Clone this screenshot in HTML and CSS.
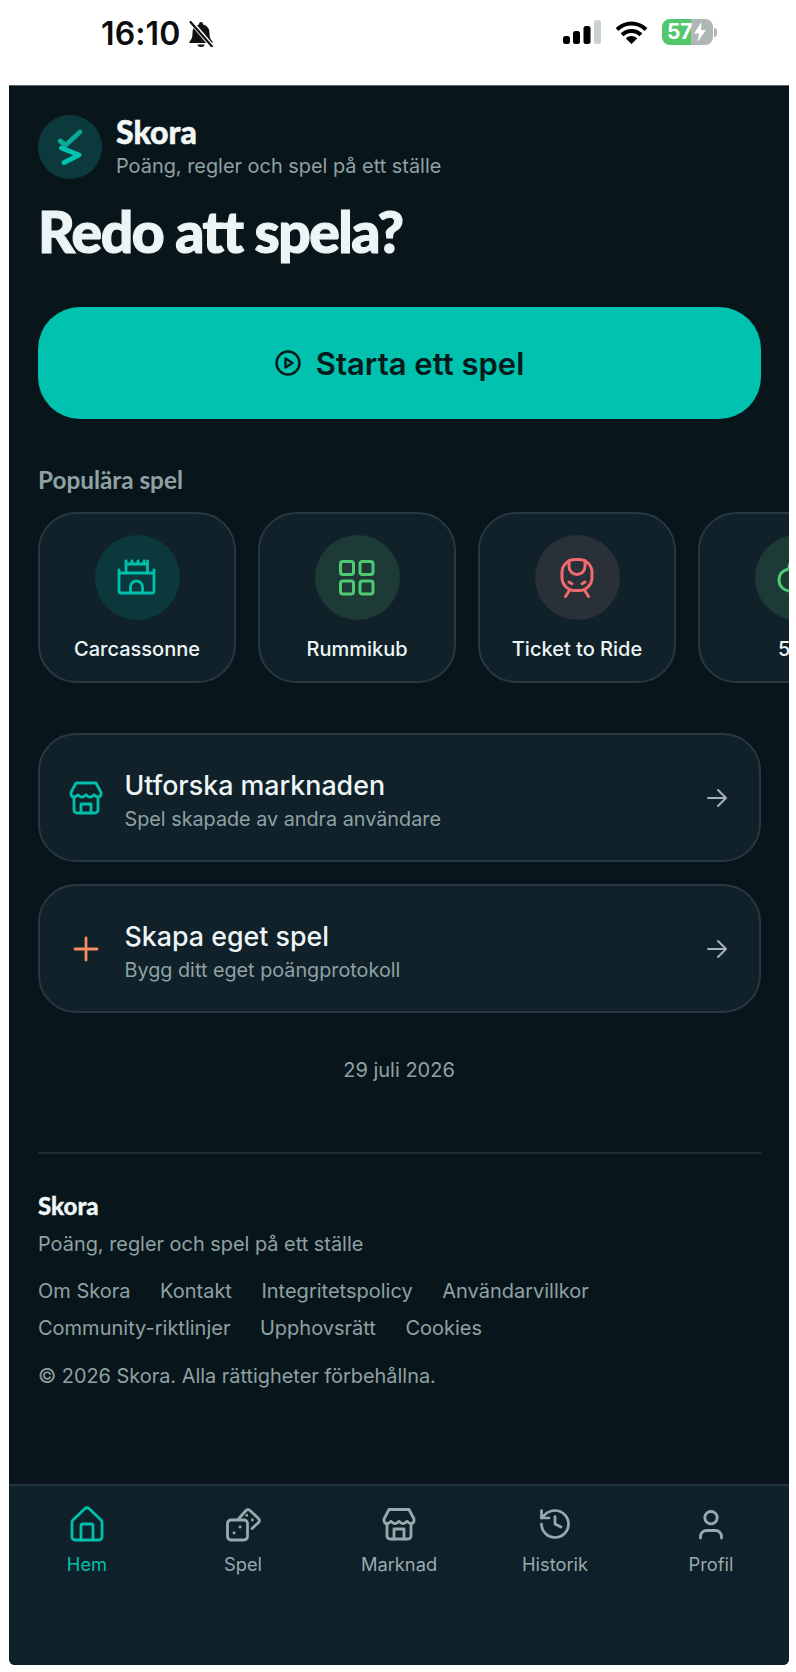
FILE: index.html
```html
<!DOCTYPE html>
<html lang="sv">
<head>
<meta charset="utf-8">
<title>Skora</title>
<link rel="stylesheet" href="styles.css">
</head>
<body>
<header class="status">
  <div class="status-left">
    <span class="time">16:10</span>
    <svg class="bell" viewBox="0 0 26 26" width="26" height="26"><path d="M13 1a2 2 0 0 1 2 2v.6c4 1 6.500 4 6.500 8.400 0 4.500 1 6.500 3 8.500V22H1.500v-1.500c2-2 3-4 3-8.500 0-4.400 2.500-7.400 6.500-8.400V3a2 2 0 0 1 2-2z" fill="#111"/><path d="M9.500 23.500a3.500 2.500 0 0 0 7 0z" fill="#111"/><path d="M2.500 0L24.500 26" stroke="#fff" stroke-width="4.500"/><path d="M2.500 1L24 25.500" stroke="#111" stroke-width="2.200" stroke-linecap="round"/></svg>
  </div>
  <div class="status-right">
    <svg viewBox="0 0 38 24" width="38" height="24"><rect x="0" y="16" width="7" height="8" rx="2.500" fill="#000"/><rect x="10" y="11" width="7" height="13" rx="2.500" fill="#000"/><rect x="20.500" y="6" width="7" height="18" rx="2.500" fill="#000"/><rect x="31" y="0" width="7" height="24" rx="2.500" fill="#c9d2d0"/></svg>
    <svg viewBox="0 0 33 23" width="33" height="23"><path d="M2 8.500c8.500-8 20.500-8 29 0M7 13.800c5.600-5.200 13.400-5.200 19 0" fill="none" stroke="#000" stroke-width="4"/><path d="M10.800 17.500c3.500-3.200 8-3.200 11.400 0l-5.700 5.500z" fill="#000"/></svg>
    <div class="battery"><div class="batt-body"><span class="batt-num">57</span><svg class="batt-bolt" viewBox="0 0 12 20" width="12" height="20"><path d="M7.500 0L0 11.500h5L3.500 20 12 8H7z" fill="#fff"/></svg></div><span class="batt-tip"></span></div>
  </div>
</header>

<div class="app">
  <main class="main">
    <section class="brand">
      <div class="logo">
        <svg viewBox="0 0 64 64" width="64" height="64"><path d="M42 17L27.700 30 22 26" fill="none" stroke="#0ea898" stroke-width="4.600" stroke-linecap="round" stroke-linejoin="round"/><path d="M23.500 33L41 40 26 47.700" fill="none" stroke="#00c4af" stroke-width="4.800" stroke-linecap="round" stroke-linejoin="round"/></svg>
      </div>
      <div class="brand-text">
        <div class="brand-name">Skora</div>
        <div class="brand-tag">Poäng, regler och spel på ett ställe</div>
      </div>
    </section>
    <h1 class="hero">Redo att spela?</h1>
    <button class="start">
      <svg viewBox="0 0 26 26" width="26" height="26"><circle cx="13" cy="13" r="11.500" fill="none" stroke="#061a1c" stroke-width="2.400"/><path d="M10.500 8.500l7 4.500-7 4.500z" fill="none" stroke="#061a1c" stroke-width="2.400" stroke-linejoin="round"/></svg>
      <span>Starta ett spel</span>
    </button>
    <h2 class="section-label">Populära spel</h2>
    <div class="carousel">
      <div class="game">
        <div class="game-icon teal">
          <svg viewBox="0 0 40 40" width="40" height="40" fill="none" stroke="#00c0ac" stroke-width="2.800" stroke-linecap="round" stroke-linejoin="round"><path d="M9 14V3h0v3h6V3h0v3h6V3h0v3h6V3h0v3h3.500V3v11"/><path d="M2 12v21a2 2 0 0 0 2 2h31a2 2 0 0 0 2-2V12v3H2"/><path d="M13.500 35v-6a6 6 0 0 1 12 0v6"/></svg>
        </div>
        <div class="game-name">Carcassonne</div>
      </div>
      <div class="game">
        <div class="game-icon green">
          <svg viewBox="0 0 40 40" width="40" height="40" fill="none" stroke="#4fc974" stroke-width="3"><rect x="3.500" y="3.500" width="13" height="13" rx="2.500"/><rect x="23" y="3.500" width="13" height="13" rx="2.500"/><rect x="3.500" y="23" width="13" height="13" rx="2.500"/><rect x="23" y="23" width="13" height="13" rx="2.500"/></svg>
        </div>
        <div class="game-name">Rummikub</div>
      </div>
      <div class="game">
        <div class="game-icon red">
          <svg viewBox="0 0 40 40" width="40" height="40" fill="none" stroke="#f06a6e" stroke-width="3" stroke-linecap="round" stroke-linejoin="round"><rect x="5" y="1.500" width="30" height="31" rx="13"/><path d="M12 2.500v6a8 8 0 0 0 16 0v-6"/><path d="M12 24l3 1.800M28 24l-3 1.800"/><path d="M12 33l-3.500 5.500M28 33l3.500 5.500"/></svg>
        </div>
        <div class="game-name">Ticket to Ride</div>
      </div>
      <div class="game">
        <div class="game-icon green">
          <svg viewBox="0 0 40 40" width="40" height="40" fill="none" stroke="#4fc974" stroke-width="3" stroke-linecap="round" stroke-linejoin="round"><path d="M20 2a8 8 0 0 0-8 9c-6 1-10 5-10 11a11 11 0 0 0 11 11h14a11 11 0 0 0 11-11c0-6-4-10-10-11a8 8 0 0 0-8-9z"/></svg>
        </div>
        <div class="game-name">500</div>
      </div>
    </div>
    <a class="row">
      <svg class="row-icon" viewBox="0 0 36 36" width="36" height="36" fill="none" stroke="#00c0ac" stroke-width="2.800" stroke-linecap="round" stroke-linejoin="round"><path d="M8 3h20l5 9.500v2a3 3 0 0 1-3 2.500c-2.500 0-3-2-4-2s-1.500 2-4 2-3-2-4-2-1.500 2-4 2-3-2-4-2-1.500 2-4 2a3 3 0 0 1-3-2.500v-2z"/><path d="M6 17v13a3 3 0 0 0 3 3h18a3 3 0 0 0 3-3V17"/><path d="M13 33v-9h10v9"/></svg>
      <div class="row-text"><div class="row-title">Utforska marknaden</div><div class="row-sub">Spel skapade av andra användare</div></div>
      <svg class="row-arrow" viewBox="0 0 24 24" width="24" height="24" fill="none" stroke="#a3b3b5" stroke-width="2" stroke-linecap="round" stroke-linejoin="round"><path d="M3 12h18M13 4l8 8-8 8"/></svg>
    </a>
    <a class="row">
      <svg class="row-icon" viewBox="0 0 36 36" width="36" height="36" fill="none" stroke="#f58d5e" stroke-width="2.800" stroke-linecap="round"><path d="M18 7v22M7 18h22"/></svg>
      <div class="row-text"><div class="row-title">Skapa eget spel</div><div class="row-sub">Bygg ditt eget poängprotokoll</div></div>
      <svg class="row-arrow" viewBox="0 0 24 24" width="24" height="24" fill="none" stroke="#a3b3b5" stroke-width="2" stroke-linecap="round" stroke-linejoin="round"><path d="M3 12h18M13 4l8 8-8 8"/></svg>
    </a>
    <div class="date">29 juli 2026</div>
    <footer class="footer">
      <div class="foot-name">Skora</div>
      <div class="foot-tag">Poäng, regler och spel på ett ställe</div>
      <nav class="foot-links"><a>Om Skora</a><a>Kontakt</a><a>Integritetspolicy</a><a>Användarvillkor</a></nav>
      <nav class="foot-links"><a>Community-riktlinjer</a><a>Upphovsrätt</a><a>Cookies</a></nav>
      <div class="copy">© 2026 Skora. Alla rättigheter förbehållna.</div>
    </footer>
  </main>
  <nav class="tabs">
    <a class="tab active">
      <svg viewBox="0 0 36 36" width="36" height="36" fill="none" stroke="currentColor" stroke-width="2.800" stroke-linecap="round" stroke-linejoin="round"><path d="M16 2.600a3 3 0 0 1 4 0L32 14a3.500 3.500 0 0 1 1 2.500V31a3 3 0 0 1-3 3H6a3 3 0 0 1-3-3V16.500A3.500 3.500 0 0 1 4 14z"/><path d="M12 34V20a2 2 0 0 1 2-2h8a2 2 0 0 1 2 2v14"/></svg>
      <span>Hem</span>
    </a>
    <a class="tab">
      <svg viewBox="0 0 36 36" width="36" height="36" fill="none" stroke="currentColor" stroke-width="2.800" stroke-linecap="round" stroke-linejoin="round"><rect x="2.500" y="14" width="20" height="20" rx="3.500"/><path d="M13.500 13l7.500-8.500a3 3 0 0 1 4 0l8.500 8a3 3 0 0 1 0 4l-6.500 6"/><path d="M9 27h.1M15 21h.1M21.700 9.300h.1M27.300 14h.1"/></svg>
      <span>Spel</span>
    </a>
    <a class="tab">
      <svg viewBox="0 0 36 36" width="36" height="36" fill="none" stroke="currentColor" stroke-width="2.800" stroke-linecap="round" stroke-linejoin="round"><path d="M8 3.500h20l5 9.500v2a3 3 0 0 1-3 2.500c-2.500 0-3-2-4-2s-1.500 2-4 2-3-2-4-2-1.500 2-4 2-3-2-4-2-1.500 2-4 2a3 3 0 0 1-3-2.500v-2z"/><path d="M6 17.500v12.500a3 3 0 0 0 3 3h18a3 3 0 0 0 3-3V17.500"/><path d="M13 33v-10h10v10"/></svg>
      <span>Marknad</span>
    </a>
    <a class="tab">
      <svg viewBox="0 0 24 24" width="36" height="36" fill="none" stroke="currentColor" stroke-width="1.800" stroke-linecap="round" stroke-linejoin="round"><path d="M3 12a9 9 0 1 0 9-9 9.750 9.750 0 0 0-6.740 2.740L3 8"/><path d="M3 3v5h5"/><path d="M12 7v5l4 2"/></svg>
      <span>Historik</span>
    </a>
    <a class="tab">
      <svg viewBox="0 0 36 36" width="36" height="36" fill="none" stroke="currentColor" stroke-width="2.800" stroke-linecap="round" stroke-linejoin="round"><circle cx="18" cy="11.700" r="6.200"/><path d="M7.500 32v-1.500a6 6 0 0 1 6-6h9a6 6 0 0 1 6 6V32"/></svg>
      <span>Profil</span>
    </a>
  </nav>
</div>
</body>
</html>
```
FILE: styles.css
```css
* { box-sizing: border-box; }
html, body { margin: 0; padding: 0; }
body { width: 796px; height: 1672px; background: #fff; font-family: "Inter", "Liberation Sans", sans-serif; overflow: hidden; }
a { display: block; color: inherit; text-decoration: none; }
svg { display: block; flex: none; }

.status { height: 85px; display: flex; justify-content: space-between; padding: 19px 79px 0 101px; }
.status-left { display: flex; align-items: flex-start; gap: 8px; height: 30px; }
.time { font-size: 32px; font-weight: 600; line-height: 30px; color: #0d0d0d; letter-spacing: 0.1px; }
.bell { margin-top: 2px; }
.status-right { display: flex; align-items: center; gap: 14px; height: 26px; }
.battery { display: flex; align-items: center; gap: 1px; }
.batt-body { width: 51px; height: 26px; border-radius: 8px; background: linear-gradient(90deg, #53c76c 0 57%, #aeb6b6 57% 100%); display: flex; align-items: center; padding-left: 5px; gap: 0; }
.batt-num { font-size: 21px; font-weight: 700; color: #fff; line-height: 26px; letter-spacing: -0.2px; }
.batt-bolt { margin-left: 2px; }
.batt-tip { width: 3px; height: 9px; background: #aeb6b6; border-radius: 0 3px 3px 0; }

.app { width: 780px; height: 1580px; margin-left: 9px; background: #08161b; border-top: 1px solid #56666b; border-radius: 0 0 6px 6px; display: flex; flex-direction: column; overflow: hidden; color: #eef5f6; }
.main { flex: 1; padding: 29px 0 0 29px; min-height: 0; }

.brand { display: flex; align-items: center; gap: 14px; height: 64px; }
.logo { width: 64px; height: 64px; border-radius: 50%; background: #0c3a3c; }
.brand-name { font-family: "Lato", sans-serif; font-size: 32px; font-weight: 900; line-height: 34px; color: #f1f7f7; -webkit-text-stroke: 0.5px #f1f7f7; margin-top: -1px; }
.brand-tag { font-size: 19.9px; color: #8fa1a3; line-height: 26px; margin-top: 4px; }
.hero { margin: 17px 0 0; font-family: "Lato", sans-serif; font-size: 57px; font-weight: 900; line-height: 70px; color: #ecf4f5; letter-spacing: -1.5px; -webkit-text-stroke: 1.2px #ecf4f5; }

.start { width: 723px; height: 112px; margin-top: 41px; border: 0; border-radius: 42px; background: #00c2ae; display: flex; align-items: center; justify-content: center; gap: 15px; color: #061a1c; font-family: "Inter", sans-serif; font-size: 31px; font-weight: 600; }

.section-label { margin: 46px 0 0; font-family: "Lato", sans-serif; font-size: 24.3px; font-weight: 700; line-height: 30px; color: #8fa1a3; }
.carousel { display: flex; gap: 22px; margin-top: 17px; }
.game { flex: none; width: 198px; height: 171px; padding-top: 21px; border: 2px solid #263841; border-radius: 38px; background: #10212a; display: flex; flex-direction: column; align-items: center; }
.game-icon { width: 85px; height: 85px; border-radius: 50%; display: flex; align-items: center; justify-content: center; }
.teal { background: #0b383b; }
.green { background: #1e3a36; }
.red { background: #2a3038; }
.game-name { margin-top: 15.5px; font-size: 20px; font-weight: 500; line-height: 26px; color: #eef5f6; white-space: nowrap; }

.row { width: 723px; height: 129px; margin-top: 22px; padding: 0 30px 0 28px; border: 2px solid #263841; border-radius: 38px; background: #10212a; display: flex; align-items: center; }
.carousel + .row { margin-top: 50px; }
.row-icon { margin-right: 20.5px; }
.row-text { flex: 1; padding-top: 4px; }
.row-title { font-size: 26.8px; font-weight: 500; line-height: 34px; color: #eef5f6; }
.row-sub { font-size: 19.8px; line-height: 26px; color: #8fa1a3; margin-top: 4px; }

.date { margin: 43px 0 0 -29px; width: 780px; text-align: center; font-size: 20px; line-height: 28px; color: #8fa1a3; }
.footer { width: 723px; margin-top: 68px; padding-top: 37px; border-top: 2px solid #1d2e36; }
.foot-name { font-family: "Lato", sans-serif; font-size: 24px; font-weight: 900; line-height: 30px; color: #f1f7f7; -webkit-text-stroke: 0.3px #f1f7f7; }
.foot-tag { margin-top: 10px; font-size: 19.9px; line-height: 26px; color: #8fa1a3; }
.foot-links { display: flex; gap: 29.5px; margin-top: 11px; font-size: 20px; line-height: 26px; color: #8fa1a3; }
.foot-tag + .foot-links { margin-top: 21px; }
.copy { margin-top: 22px; font-size: 19.9px; line-height: 26px; color: #8fa1a3; }

.tabs { height: 181px; flex: none; background: #0e2029; border-top: 2px solid #22343c; display: flex; padding-top: 20px; }
.tab { flex: 1; display: flex; flex-direction: column; align-items: center; color: #9aa9ab; font-size: 18.3px; line-height: 24px; }
.tab span { margin-top: 10px; }
.tab.active { color: #00c0ac; }
```
